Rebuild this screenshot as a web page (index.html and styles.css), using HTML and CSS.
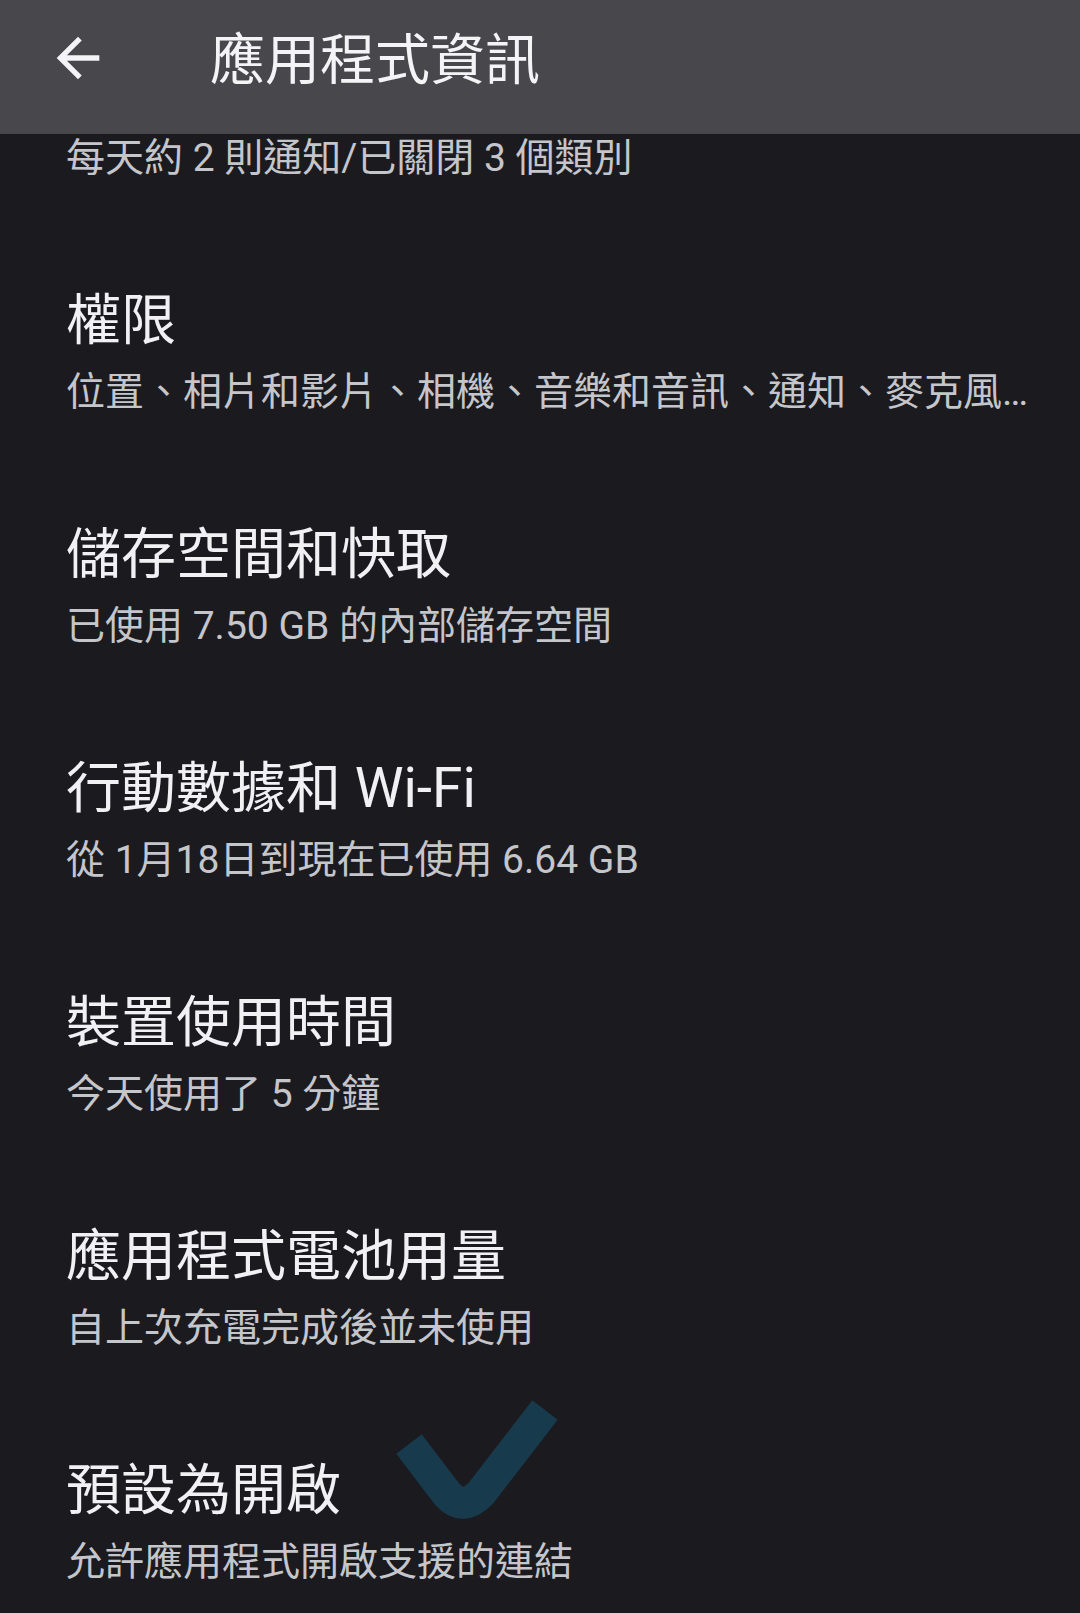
FILE: index.html
```html
<!DOCTYPE html>
<html>

<head>
  <title>應用程式資訊</title>
  <meta name="viewport" content="width=device-width, initial-scale=1">
  <link rel="stylesheet" href="styles.css">
</head>

<body>
  <!-- 頂部欄 -->
  <div class="topbar">
    <svg class="back" viewBox="0 0 24 24">
      <path d="M20 11H7.83l5.59-5.59L12 4l-8 8 8 8 1.41-1.41L7.83 13H20v-2z" />
    </svg>
    <div class="topbar-title">應用程式資訊</div>
  </div>

  <!-- 設定清單 -->
  <div class="list">
    <div class="item item-cut">
      <div class="item-sub">每天約 2 則通知/已關閉 3 個類別</div>
    </div>
    <div class="item">
      <div class="item-title">權限</div>
      <div class="item-sub">位置、相片和影片、相機、音樂和音訊、通知、麥克風…</div>
    </div>
    <div class="item">
      <div class="item-title">儲存空間和快取</div>
      <div class="item-sub">已使用 7.50 GB 的內部儲存空間</div>
    </div>
    <div class="item">
      <div class="item-title">行動數據和 Wi-Fi</div>
      <div class="item-sub">從 1月18日到現在已使用 6.64 GB</div>
    </div>
    <div class="item">
      <div class="item-title">裝置使用時間</div>
      <div class="item-sub">今天使用了 5 分鐘</div>
    </div>
    <div class="item">
      <div class="item-title">應用程式電池用量</div>
      <div class="item-sub">自上次充電完成後並未使用</div>
    </div>
    <div class="item">
      <div class="item-title">預設為開啟</div>
      <div class="item-sub">允許應用程式開啟支援的連結</div>
    </div>
  </div>

  <!-- 標記的勾號 -->
  <svg class="check" viewBox="0 0 180 135">
    <path d="M24 54 L62 104 Q78 122 96 103 Q120 72 160 20" />
  </svg>
</body>

</html>
```

FILE: styles.css
```css
body {
  margin: 0;
  background: #1b1b1f;
  font-family: Roboto, "Noto Sans CJK TC", sans-serif;
  height: 1613px;
  overflow: hidden;
  position: relative;
}

.topbar {
  height: 134px;
  background: #47474c;
  display: flex;
  align-items: center;
  padding-left: 46px;
}

.back {
  width: 64px;
  height: 64px;
  fill: #f4f4f6;
  margin-top: -18px;
}

.topbar-title {
  color: #f4f4f6;
  font-size: 55px;
  margin-left: 100px;
  margin-top: -24px;
}

.list {
  padding-left: 66px;
  padding-right: 30px;
}

.item {
  padding: 45px 0 45px;
}

.item-cut {
  padding-top: 0;
  margin-top: -10px;
}

.item-title {
  color: #f1f1f4;
  font-size: 55px;
  line-height: 76px;
}

.item-sub {
  color: #c5c6cc;
  font-size: 39px;
  line-height: 68px;
  white-space: nowrap;
}

.check {
  position: absolute;
  left: 385px;
  top: 1390px;
  width: 180px;
  height: 135px;
}

.check path {
  fill: none;
  stroke: #173a4d;
  stroke-width: 32;
}
```
